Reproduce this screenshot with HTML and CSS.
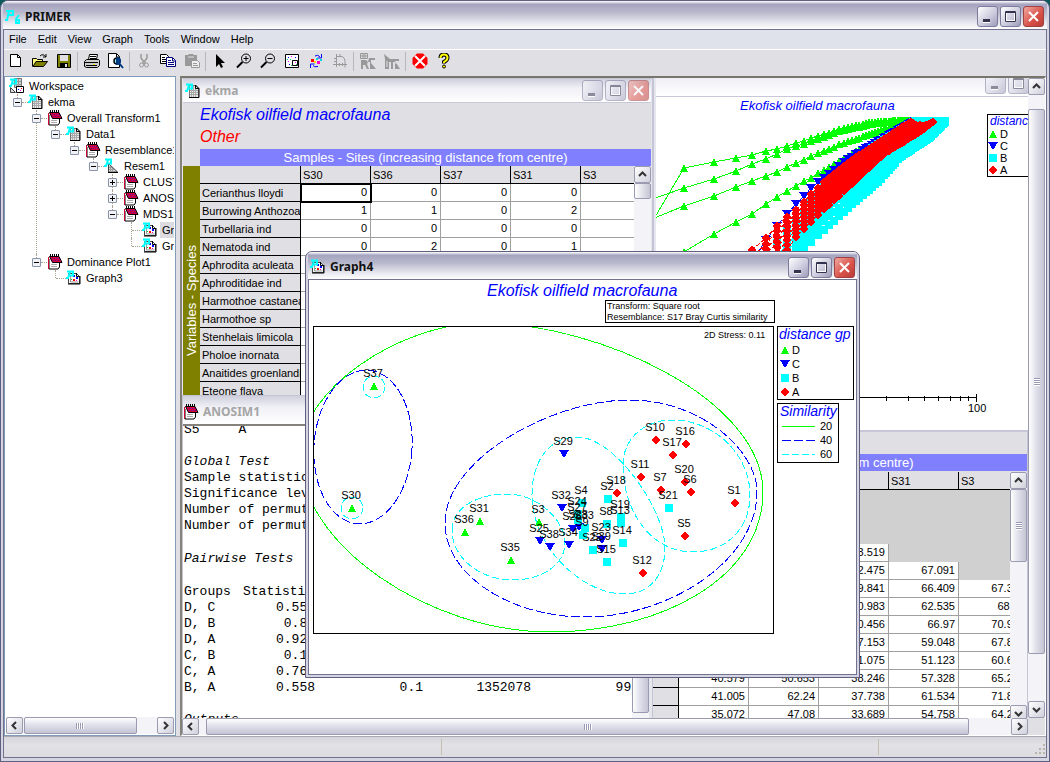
FILE: index.html
```html
<!DOCTYPE html>
<html lang="en">
<head>
    <meta charset="utf-8">
    <title>PRIMER</title>
    <link rel="stylesheet" href="styles.css">
</head>
<body>

<svg class="defs" aria-hidden="true">
    <symbol id="i-p" viewBox="0 0 16 16"><path d="M1 1.500h6v4H3M4 2L2 8H0" fill="none" stroke="#0ff" stroke-width="2"/></symbol>
    <symbol id="i-primer" viewBox="0 0 16 16"><path d="M1 2h7v4H4M4 2L2 11H0M14 6l-3 4v4h3v-3h-3" fill="none" stroke="#0ff" stroke-width="2"/></symbol>
    <symbol id="i-sheet" viewBox="0 0 16 16">
        <path d="M4.500 2.500h6l3 3v9h-9z" fill="#e8e8e8" stroke="#777"/>
        <path d="M5 7.500h8M5 9.500h8M5 11.500h8M6.500 5v9M8.500 3v11M10.500 4v10" stroke="#aaa"/>
        <path d="M14 5.500v9H4M10.500 2v3.500h3.500z" fill="none" stroke="#000"/>
        <use href="#i-p"/>
    </symbol>
    <symbol id="i-book" viewBox="0 0 16 16">
        <path d="M2 5v10h9l1.500-2V6" fill="#fff" stroke="#000"/>
        <path d="M1.500 3v12" stroke="#d00030"/>
        <path d="M4 10.500h6M4 12.500h6" stroke="#aaa"/>
        <path d="M2.500 2.500H12l3 6H5.500z" fill="#d8003c" stroke="#000"/>
        <path d="M5 4.500h7M6 6.500h7" stroke="#6010a0" stroke-dasharray="1 1"/>
        <path d="M3 1h10" stroke="#000" stroke-dasharray="1 1" stroke-width="2"/>
    </symbol>
    <symbol id="i-tri" viewBox="0 0 16 16">
        <path d="M4.500 5.500l9 8.500h-9z" fill="#ddd" stroke="#444"/><path d="M4 14.500h10" stroke="#000"/>
        <path d="M5 9.500h3M5 11.500h5M6.500 8v6M8.500 10v4" stroke="#999"/><use href="#i-p"/>
    </symbol>
    <symbol id="i-graph" viewBox="0 0 16 16">
        <path d="M2.500 3.500h8l3 3v7h-11z" fill="#fff" stroke="#444"/>
        <path d="M14 6v8H2M10.500 3v3.500H14" fill="none" stroke="#000"/>
        <path d="M4.500 5v7h8" fill="none" stroke="#999"/>
        <path d="M7 5h2v2H7zM10 7h2v2h-2z" fill="#00f"/><path d="M7 9h2v2H7z" fill="#f00"/><path d="M10 10h1v1h-1z" fill="#f0c"/><path d="M5 9h1v1H5z" fill="#0c4"/>
        <use href="#i-p"/>
    </symbol>
    <symbol id="i-space" viewBox="0 0 16 16">
        <path d="M5.500 .5h7v9h-7z" fill="#ccc" stroke="#777"/><path d="M7.500 1v9M9.500 1v9M5 3.500h7M5 6.500h7" stroke="#999"/>
        <path d="M1.500 9.500l5 5h-5z" fill="#ddd" stroke="#444"/><path d="M7.500 8.500h7v6h-7z" fill="#fff" stroke="#000"/>
        <path d="M9 11h1v1H9z" fill="#00f"/><path d="M12 10h1v1h-1z" fill="#f00"/><path d="M11 12h1v1h-1z" fill="#f0c"/><use href="#i-p"/>
    </symbol>
    <symbol id="t-new" viewBox="0 0 16 16"><path d="M2.500 1.500h7l3 3v9h-10z" fill="#fff" stroke="#000"/><path d="M9.500 1.500v3h3" fill="none" stroke="#000"/></symbol>
    <symbol id="t-open" viewBox="0 0 16 16"><path d="M.5 13.500v-8h4l1 1h5v2" fill="#ffff80" stroke="#000"/><path d="M1 13.500l3-5h11.500l-4 5z" fill="#808000" stroke="#000"/><path d="M8 3q3-3 6 1m0-3v3h-3" fill="none" stroke="#000"/></symbol>
    <symbol id="t-save" viewBox="0 0 16 16"><path d="M1.500 1.500h13v13h-13z" fill="#808000" stroke="#000"/><path d="M4 2h8v6H4z" fill="#e0dfe3"/><path d="M4 10h8v4H4z" fill="#000"/><path d="M9 11h2v3H9z" fill="#e0dfe3"/></symbol>
    <symbol id="t-print" viewBox="0 0 16 16"><path d="M4.500 6.500l1-5h8l-1 5" fill="#fff" stroke="#000"/><path d="M6 3.500h6M6 5.500h6" stroke="#000"/><path d="M.5 8.500l2-2h12l1 1v5l-2 2h-11l-2-1z" fill="#ccc" stroke="#000"/><path d="M1 9.500h13M2 12.500h11" stroke="#000"/><path d="M9 11h2v1H9z" fill="#ee0"/></symbol>
    <symbol id="t-preview" viewBox="0 0 16 16"><path d="M.5 .5h8l3 3v11H.5z" fill="#fff" stroke="#000"/><path d="M8.500 1v3h3" fill="none" stroke="#000"/><circle cx="9" cy="8" r="3" fill="#9ff" stroke="#000" stroke-width="1.500"/><path d="M9 5v6a3 3 0 0 0 0-6M11 10l4 5" fill="#004c9c" stroke="#003880" stroke-width="2"/></symbol>
    <symbol id="t-cut" viewBox="0 0 16 16"><path d="M5 1v4l3 4M11 1v4L8 9M7 9v2M9 9v2" fill="none" stroke="#999" stroke-width="1.500"/><circle cx="5.500" cy="12" r="2" fill="none" stroke="#999"/><circle cx="10.500" cy="12" r="2" fill="none" stroke="#999"/></symbol>
    <symbol id="t-copy" viewBox="0 0 16 16"><path d="M.5 1.500h6l2 2v7h-8z" fill="#fff" stroke="#000"/><path d="M2 4.500h3M2 6.500h5M2 8.500h5" stroke="#000"/><path d="M6.500 4.500h6l3 3v6h-9z" fill="#fff" stroke="#000080"/><path d="M12.500 5v3h3M8 7.500h3M8 9.500h6M8 11.500h6" fill="none" stroke="#000080"/></symbol>
    <symbol id="t-paste" viewBox="0 0 16 16"><path d="M1 2h3l1-1h4l1 1h3v11H1z" fill="#999"/><path d="M4 4h6" stroke="#e0dfe3"/><path d="M7.500 7.500h6l2 2v5h-8z" fill="#eee" stroke="#999"/><path d="M9 10.500h4M9 12.500h5" stroke="#999"/></symbol>
    <symbol id="t-arrow" viewBox="0 0 16 16"><path d="M4 1l9 9H9l2 4-2 1-2-4-3 3z" fill="#000"/></symbol>
    <symbol id="t-zin" viewBox="0 0 16 16"><circle cx="10" cy="5.500" r="4.500" fill="none" stroke="#000"/><path d="M7.500 5.500h5M10 3v5" stroke="#000"/><path d="M6.500 9L1 14.500" stroke="#000" stroke-width="2"/></symbol>
    <symbol id="t-zout" viewBox="0 0 16 16"><circle cx="10" cy="5.500" r="4.500" fill="none" stroke="#000"/><path d="M7.500 5.500h5" stroke="#000"/><path d="M6.500 9L1 14.500" stroke="#000" stroke-width="2"/></symbol>
    <symbol id="t-box" viewBox="0 0 16 16"><path d="M1.500 1.500h13v13h-13z" fill="#fff" stroke="#000"/><path d="M8.500 7.500h5v5h-5z" fill="none" stroke="#000"/><path d="M4 4h1v1H4zM11 4h1v1h-1zM5 11h1v1H5z" fill="#00f"/><path d="M7 3h1v1H7zM4 8h1v1H4zM11 9h1v1h-1z" fill="#f0f"/><path d="M3 6h1v1H3zM6 6h1v1H6zM12 11h1v1h-1zM7 12h1v1H7z" fill="#0c8"/></symbol>
    <symbol id="t-rot" viewBox="0 0 16 16"><path d="M7 3q3-2 5 1M13.500 1v4h-4M10 13.500q-4 1-5-1M2.500 15v-4h4" fill="none" stroke="#00f"/><path d="M3 6h3v3H3z" fill="#f00"/><path d="M8 5h2v2H8z" fill="#0dd"/><path d="M6 8h2v2H6z" fill="#fd0"/><path d="M9 8h3v3H9z" fill="#f0c"/><path d="M12 6h2v2h-2z" fill="#0dd"/></symbol>
    <symbol id="t-flip" viewBox="0 0 16 16"><path d="M4.500 1v13M1 11.500h14M4 3.500h6q3 1 3 5v6M2 5.500h3M2 8.500h3M7.500 10v3M10.500 10v3M8 1v3" fill="none" stroke="#999"/></symbol>
    <symbol id="t-r1" viewBox="0 0 16 16"><path d="M.5 .5h7v5h-7zM3 1v4M5 1v4M1 3h7" fill="none" stroke="#999"/><path d="M1 7h5l2 2-1 2 2 5H7l-2-4H3v4H1zM9 5h6v2h-4v3l5 6h-6V9H8z" fill="#999"/></symbol>
    <symbol id="t-r2" viewBox="0 0 16 16"><path d="M0 1l6 5h9v2h-4l5 8h-5V9H9v7H7V9H5v7H1V6z" fill="#999"/><path d="M3 8v6M12 8v3" stroke="#e0dfe3"/></symbol>
    <symbol id="t-stop" viewBox="0 0 16 16"><path d="M5 .5h6L15.500 5v6L11 15.500H5L.5 11V5z" fill="#f00"/><path d="M3 3l10 10M13 3L3 13" stroke="#fff" stroke-width="2"/></symbol>
    <symbol id="t-help" viewBox="0 0 16 16"><path d="M4.500 5q0-3.500 3.500-3.500T11.500 5Q11.500 7 8 9v1.500" fill="none" stroke="#000" stroke-width="4"/><path d="M4.500 5q0-3.500 3.500-3.500T11.500 5Q11.500 7 8 9v1" fill="none" stroke="#ff0" stroke-width="2"/><circle cx="8" cy="13.500" r="1.500" fill="#ff0" stroke="#000"/></symbol>
    <symbol id="b-min" viewBox="0 0 19 19"><path d="M5 13h7v3H5z" fill="#fff"/><path d="M5 12h7v3H5z" fill="currentColor"/></symbol>
    <symbol id="b-max" viewBox="0 0 19 19"><path d="M5 5h9v9H5z" fill="none" stroke="#fff" stroke-width="2"/><path d="M4.500 4.500h10v10h-10zM4 5.500h11" fill="none" stroke="currentColor"/></symbol>
    <symbol id="b-close" viewBox="0 0 19 19"><path d="M5 5l9 9M14 5l-9 9" stroke="#fff" stroke-width="2"/></symbol>
    <symbol id="s-up" viewBox="0 0 9 9"><path d="M1 6l3.500-3.500L8 6" fill="none" stroke="#333" stroke-width="2"/></symbol>
    <symbol id="s-down" viewBox="0 0 9 9"><path d="M1 3l3.500 3.500L8 3" fill="none" stroke="#333" stroke-width="2"/></symbol>
    <symbol id="s-left" viewBox="0 0 9 9"><path d="M6 1L2.500 4.500 6 8" fill="none" stroke="#333" stroke-width="2"/></symbol>
    <symbol id="s-right" viewBox="0 0 9 9"><path d="M3 1l3.500 3.500L3 8" fill="none" stroke="#333" stroke-width="2"/></symbol>
</svg>

<div class="app">
    <header class="titlebar main-title">
        <svg class="ico"><use href="#i-primer"/></svg>
        <h1 class="caption">PRIMER</h1>
        <div class="winbtns">
            <button aria-label="Minimize"><svg><use href="#b-min"/></svg></button>
            <button aria-label="Maximize"><svg><use href="#b-max"/></svg></button>
            <button class="close" aria-label="Close"><svg><use href="#b-close"/></svg></button>
        </div>
    </header>

    <div class="inner">
        <nav class="menubar">
            <button>File</button><button>Edit</button><button>View</button><button>Graph</button><button>Tools</button><button>Window</button><button>Help</button>
        </nav>

        <div class="toolbar">
            <button aria-label="New"><svg class="ico"><use href="#t-new"/></svg></button>
            <button aria-label="Open"><svg class="ico"><use href="#t-open"/></svg></button>
            <button aria-label="Save"><svg class="ico"><use href="#t-save"/></svg></button>
            <span class="sep"></span>
            <button aria-label="Print"><svg class="ico"><use href="#t-print"/></svg></button>
            <button aria-label="Print preview"><svg class="ico"><use href="#t-preview"/></svg></button>
            <span class="sep"></span>
            <button aria-label="Cut"><svg class="ico"><use href="#t-cut"/></svg></button>
            <button aria-label="Copy"><svg class="ico"><use href="#t-copy"/></svg></button>
            <button aria-label="Paste"><svg class="ico"><use href="#t-paste"/></svg></button>
            <span class="sep"></span>
            <button aria-label="Select"><svg class="ico"><use href="#t-arrow"/></svg></button>
            <button aria-label="Zoom in"><svg class="ico"><use href="#t-zin"/></svg></button>
            <button aria-label="Zoom out"><svg class="ico"><use href="#t-zout"/></svg></button>
            <button aria-label="Sub plot"><svg class="ico"><use href="#t-box"/></svg></button>
            <button aria-label="Rotate"><svg class="ico"><use href="#t-rot"/></svg></button>
            <button aria-label="Flip axes"><svg class="ico"><use href="#t-flip"/></svg></button>
            <span class="sep"></span>
            <button aria-label="Rerun data"><svg class="ico"><use href="#t-r1"/></svg></button>
            <button aria-label="Rerun resemblance"><svg class="ico"><use href="#t-r2"/></svg></button>
            <span class="sep"></span>
            <button aria-label="Stop"><svg class="ico"><use href="#t-stop"/></svg></button>
            <button aria-label="Help"><svg class="ico"><use href="#t-help"/></svg></button>
        </div>

        <main class="work">
            <aside class="explorer">
                <div class="treebox">
                    <div class="node root"><svg class="ico"><use href="#i-space"/></svg><span>Workspace</span></div>
                    <ul class="tree">
                        <li><div class="node"><button class="exp" aria-label="Collapse"></button><svg class="ico"><use href="#i-sheet"/></svg><span>ekma</span></div>
                            <ul>
                                <li><div class="node"><button class="exp" aria-label="Collapse"></button><svg class="ico"><use href="#i-book"/></svg><span>Overall Transform1</span></div>
                                    <ul>
                                        <li><div class="node"><button class="exp" aria-label="Collapse"></button><svg class="ico"><use href="#i-sheet"/></svg><span>Data1</span></div>
                                            <ul>
                                                <li><div class="node"><button class="exp" aria-label="Collapse"></button><svg class="ico"><use href="#i-book"/></svg><span>Resemblance1</span></div>
                                                    <ul>
                                                        <li><div class="node"><button class="exp" aria-label="Collapse"></button><svg class="ico"><use href="#i-tri"/></svg><span>Resem1</span></div>
                                                            <ul>
                                                                <li><div class="node"><button class="exp plus" aria-label="Expand"></button><svg class="ico"><use href="#i-book"/></svg><span>CLUSTER1</span></div></li>
                                                                <li><div class="node"><button class="exp plus" aria-label="Expand"></button><svg class="ico"><use href="#i-book"/></svg><span>ANOSIM1</span></div></li>
                                                                <li><div class="node"><button class="exp" aria-label="Collapse"></button><svg class="ico"><use href="#i-book"/></svg><span>MDS1</span></div>
                                                                    <ul>
                                                                        <li><div class="node leaf"><svg class="ico"><use href="#i-graph"/></svg><span class="sel">Graph4</span></div></li>
                                                                        <li><div class="node leaf"><svg class="ico"><use href="#i-graph"/></svg><span>Graph5</span></div></li>
                                                                    </ul>
                                                                </li>
                                                            </ul>
                                                        </li>
                                                    </ul>
                                                </li>
                                            </ul>
                                        </li>
                                    </ul>
                                </li>
                                <li><div class="node"><button class="exp" aria-label="Collapse"></button><svg class="ico"><use href="#i-book"/></svg><span>Dominance Plot1</span></div>
                                    <ul>
                                        <li><div class="node leaf"><svg class="ico"><use href="#i-graph"/></svg><span>Graph3</span></div></li>
                                    </ul>
                                </li>
                            </ul>
                        </li>
                    </ul>
                </div>
                <div class="hscroll">
                    <button aria-label="Scroll left"><svg><use href="#s-left"/></svg></button>
                    <div class="track"><div class="thumb tree-thumb"></div></div>
                    <button aria-label="Scroll right"><svg><use href="#s-right"/></svg></button>
                </div>
            </aside>

            <div class="mdi">
                <div class="desk">

                    <section class="win win-resem">
                        <div class="titlebar"><svg class="ico"><use href="#i-tri"/></svg><h2 class="caption">Resem1</h2></div>
                        <div class="content sheet">
                            <div class="band resem-band">Samples - Sites (increasing distance from centre)</div>
                            <div class="gridrow">
                                <div class="gridclip">
                                    <table class="grid resem-grid">
                                        <thead><tr><th class="rh"></th><th>S30</th><th>S36</th><th>S37</th><th>S31</th><th>S3</th></tr></thead>
                                        <tbody>
                                            <tr><th class="rh">S30</th><td class="off"></td><td class="off"></td><td class="off"></td><td class="off"></td><td class="off"></td></tr>
                                            <tr><th class="rh">S36</th><td></td><td class="off"></td><td class="off"></td><td class="off"></td><td class="off"></td></tr>
                                            <tr><th class="rh">S37</th><td></td><td></td><td class="off"></td><td class="off"></td><td class="off"></td></tr>
                                            <tr><th class="rh">S31</th><td></td><td></td><td>53.519</td><td class="off"></td><td class="off"></td></tr>
                                            <tr><th class="rh">S3</th><td></td><td></td><td>42.475</td><td>67.091</td><td class="off"></td></tr>
                                            <tr><th class="rh"></th><td></td><td></td><td>39.841</td><td>66.409</td><td>67.312</td></tr>
                                            <tr><th class="rh"></th><td></td><td></td><td>40.983</td><td>62.535</td><td>68.14</td></tr>
                                            <tr><th class="rh"></th><td></td><td></td><td>40.456</td><td>66.97</td><td>70.921</td></tr>
                                            <tr><th class="rh"></th><td></td><td></td><td>37.153</td><td>59.048</td><td>67.843</td></tr>
                                            <tr><th class="rh"></th><td></td><td></td><td>31.075</td><td>51.123</td><td>60.617</td></tr>
                                            <tr><th class="rh"></th><td>40.579</td><td>50.653</td><td>38.246</td><td>57.328</td><td>65.224</td></tr>
                                            <tr><th class="rh"></th><td>41.005</td><td>62.24</td><td>37.738</td><td>61.534</td><td>71.805</td></tr>
                                            <tr><th class="rh"></th><td>35.072</td><td>47.08</td><td>33.689</td><td>54.758</td><td>64.239</td></tr>
                                        </tbody>
                                    </table>
                                </div>
                                <div class="vscroll">
                                    <button aria-label="Scroll up"><svg><use href="#s-up"/></svg></button>
                                    <div class="track"><div class="thumb resem-thumb"></div></div>
                                    <button aria-label="Scroll down"><svg><use href="#s-down"/></svg></button>
                                </div>
                            </div>
                        </div>
                    </section>

                    <section class="win win-dom">
                        <div class="titlebar">
                            <svg class="ico"></svg><h2 class="caption"></h2>
                            <div class="winbtns">
                                <button aria-label="Minimize"><svg><use href="#b-min"/></svg></button>
                                <button aria-label="Maximize"><svg><use href="#b-max"/></svg></button>
                            </div>
                        </div>
                        <div class="content">
                            <svg class="plot" id="domPlot" width="372" height="332" viewBox="656 97 372 332" role="img" aria-label="Dominance plot">
                                <text class="t-small" x="740" y="110">Ekofisk oilfield macrofauna</text>
                                <g id="domCurves"></g>
                                <path class="ink" d="M656 397.500H976M976.500 394v8M968.500 396v5M960.500 396v5M950.500 396v5M938.500 396v5M924.500 396v5M908.500 396v5M886.500 396v5"/>
                                <text x="968" y="412">100</text>
                                <rect class="frame" x="987.500" y="114.500" width="60" height="62"/>
                                <text class="t-small t-leg" x="990" y="125">distance gp</text>
                                <g class="keys" data-x="993" data-y="134" data-step="12"></g>
                            </svg>
                        </div>
                    </section>

                    <section class="win win-ekma">
                        <div class="titlebar">
                            <svg class="ico"><use href="#i-sheet"/></svg><h2 class="caption">ekma</h2>
                            <div class="winbtns">
                                <button aria-label="Minimize"><svg><use href="#b-min"/></svg></button>
                                <button aria-label="Maximize"><svg><use href="#b-max"/></svg></button>
                                <button class="close" aria-label="Close"><svg><use href="#b-close"/></svg></button>
                            </div>
                        </div>
                        <div class="content sheet">
                            <div class="heading blue">Ekofisk oilfield macrofauna</div>
                            <div class="heading red">Other</div>
                            <div class="band">Samples - Sites (increasing distance from centre)</div>
                            <div class="gridrow">
                                <div class="side"><span>Variables - Species</span></div>
                                <div class="gridclip">
                                    <table class="grid">
                                        <thead><tr><th class="rh"></th><th>S30</th><th>S36</th><th>S37</th><th>S31</th><th>S3</th></tr></thead>
                                        <tbody>
                                            <tr><th class="rh">Cerianthus lloydi</th><td class="cur">0</td><td>0</td><td>0</td><td>0</td><td></td></tr>
                                            <tr><th class="rh">Burrowing Anthozoa</th><td>1</td><td>1</td><td>0</td><td>2</td><td></td></tr>
                                            <tr><th class="rh">Turbellaria ind</th><td>0</td><td>0</td><td>0</td><td>0</td><td></td></tr>
                                            <tr><th class="rh">Nematoda ind</th><td>0</td><td>2</td><td>0</td><td>1</td><td></td></tr>
                                            <tr><th class="rh">Aphrodita aculeata</th><td></td><td></td><td></td><td></td><td></td></tr>
                                            <tr><th class="rh">Aphroditidae ind</th><td></td><td></td><td></td><td></td><td></td></tr>
                                            <tr><th class="rh">Harmothoe castanea</th><td></td><td></td><td></td><td></td><td></td></tr>
                                            <tr><th class="rh">Harmothoe sp</th><td></td><td></td><td></td><td></td><td></td></tr>
                                            <tr><th class="rh">Stenhelais limicola</th><td></td><td></td><td></td><td></td><td></td></tr>
                                            <tr><th class="rh">Pholoe inornata</th><td></td><td></td><td></td><td></td><td></td></tr>
                                            <tr><th class="rh">Anaitides groenlandica</th><td></td><td></td><td></td><td></td><td></td></tr>
                                            <tr><th class="rh">Eteone flava</th><td></td><td></td><td></td><td></td><td></td></tr>
                                        </tbody>
                                    </table>
                                </div>
                                <div class="vscroll">
                                    <button aria-label="Scroll up"><svg><use href="#s-up"/></svg></button>
                                    <div class="track"><div class="thumb ekma-thumb"></div></div>
                                </div>
                            </div>
                        </div>
                    </section>

                    <section class="win win-anosim">
                        <div class="titlebar"><svg class="ico"><use href="#i-book"/></svg><h2 class="caption">ANOSIM1</h2></div>
                        <div class="content report">
                            <div class="report-text">
<pre>S5     A

<i>Global Test</i>
Sample statistic (Global R): 0.54
Significance level of sample statistic: 0.1%
Number of permutations: 999
Number of permuted statistics: 0
</pre>
<pre>
<i>Pairwise Tests</i>
</pre>
                                <table class="pairs">
                                    <thead><tr><th>Groups</th><th>Statistic</th><th></th><th></th><th></th></tr></thead>
                                    <tbody>
                                        <tr><td>D, C</td><td>0.556</td><td></td><td></td><td></td></tr>
                                        <tr><td>D, B</td><td>0.85</td><td></td><td></td><td></td></tr>
                                        <tr><td>D, A</td><td>0.924</td><td></td><td></td><td></td></tr>
                                        <tr><td>C, B</td><td>0.16</td><td></td><td></td><td></td></tr>
                                        <tr><td>C, A</td><td>0.769</td><td></td><td></td><td></td></tr>
                                        <tr><td>B, A</td><td>0.558</td><td>0.1</td><td>1352078</td><td>999</td></tr>
                                    </tbody>
                                </table>
<pre class="after"><i>Outputs</i></pre>
                            </div>
                            <div class="vscroll"><div class="track"><div class="thumb anosim-thumb"></div></div></div>
                        </div>
                    </section>

                    <section class="win win-graph active">
                        <div class="titlebar">
                            <svg class="ico"><use href="#i-graph"/></svg><h2 class="caption">Graph4</h2>
                            <div class="winbtns">
                                <button aria-label="Minimize"><svg><use href="#b-min"/></svg></button>
                                <button aria-label="Maximize"><svg><use href="#b-max"/></svg></button>
                                <button class="close" aria-label="Close"><svg><use href="#b-close"/></svg></button>
                            </div>
                        </div>
                        <div class="content">
                            <svg class="plot" width="548" height="394" viewBox="309 280 548 394" role="img" aria-label="MDS plot">
                                <text class="t-big" x="487" y="296">Ekofisk oilfield macrofauna</text>
                                <rect class="frame" x="605.500" y="300.500" width="169" height="22"/>
                                <text class="t-note" x="607" y="309">Transform: Square root</text>
                                <text class="t-note" x="607" y="320">Resemblance: S17 Bray Curtis similarity</text>
                                <rect class="frame" x="313.500" y="326.500" width="460" height="307"/>
                                <text class="t-note" x="704" y="338">2D Stress: 0.11</text>
                                <clipPath id="area"><rect x="314" y="327" width="459" height="306"/></clipPath>
                                <g clip-path="url(#area)">
                                    <path class="c20" d="M300 455C300 390 400 323 483 323C600 323 763 400 763 492C763 577 662 632 550 632C430 632 300 545 300 455"/>
                                    <ellipse class="c40" cx="363" cy="447" rx="49" ry="77" transform="rotate(4 363 447)"/>
                                    <path class="c40" d="M445 523C445 460 550 400 630 400C700 400 757 450 757 492C757 560 670 617 585 617C510 617 445 575 445 523z"/>
                                    <circle class="c60" cx="374" cy="387" r="11"/>
                                    <circle class="c60" cx="352" cy="508" r="11"/>
                                    <path class="c60" d="M452 530C452 508 477 494 507 494C537 494 565 520 565 543C565 565 541 580 513 580C480 580 452 558 452 530z"/>
                                    <path class="c60" d="M532 495C532 460 550 437 577 437C615 437 665 510 665 548C665 575 650 594 625 594C580 594 532 545 532 495z"/>
                                    <path class="c60" d="M623 465C623 438 645 420 672 420C715 420 750 455 750 495C750 530 725 552 693 552C650 552 623 510 623 465z"/>
                                </g>
                                <g id="mdsPoints"></g>
                                <rect class="frame" x="777.500" y="326.500" width="76" height="73"/>
                                <text class="t-head" x="779" y="339">distance gp</text>
                                <g class="keys" data-x="785" data-y="350" data-step="14"></g>
                                <rect class="frame" x="777.500" y="403.500" width="61" height="59"/>
                                <text class="t-head" x="780" y="416">Similarity</text>
                                <path class="c20" d="M782 426.500h33"/><text x="820" y="430">20</text>
                                <path class="c40" d="M782 440.500h33"/><text x="820" y="444">40</text>
                                <path class="c60" d="M782 454.500h33"/><text x="820" y="458">60</text>
                            </svg>
                        </div>
                    </section>
                </div>

                <div class="vscroll main-v">
                    <button aria-label="Scroll up"><svg><use href="#s-up"/></svg></button>
                    <div class="track"><div class="thumb main-vthumb"></div></div>
                    <button aria-label="Scroll down"><svg><use href="#s-down"/></svg></button>
                </div>
                <div class="hscroll main-h">
                    <button aria-label="Scroll left"><svg><use href="#s-left"/></svg></button>
                    <div class="track"><div class="thumb main-hthumb"></div></div>
                    <button aria-label="Scroll right"><svg><use href="#s-right"/></svg></button>
                </div>
            </div>
        </main>

        <footer class="status">
            <span></span><span></span>
            <svg class="sizer" viewBox="0 0 12 12"><path d="M9 1h2v2H9zM5 5h2v2H5zM9 5h2v2H9zM1 9h2v2H1zM5 9h2v2H5zM9 9h2v2H9z" fill="#b8b4a8"/></svg>
        </footer>
    </div>
</div>

<script src="plots.js"></script>
</body>
</html>
```
FILE: styles.css
```css
* {
    box-sizing: border-box;
}

body {
    margin: 0;
    height: 100vh;
    overflow: hidden;
    background: #0a5a5a;
    font-family: "Liberation Sans", Arial, sans-serif;
    font-size: 11px;
    color: #000;
    cursor: default;
}

button {
    padding: 0;
    margin: 0;
    border: 0;
    background: none;
    font: inherit;
    color: inherit;
}

ul {
    list-style: none;
    margin: 0;
    padding: 0;
}

.defs {
    display: none;
}

.ico {
    width: 16px;
    height: 16px;
    flex: none;
}

/* frame */
.app {
    display: flex;
    flex-direction: column;
    height: 100%;
    border: 1px solid #5f5f80;
    border-radius: 8px 8px 0 0;
    background: #d4d4e2;
    padding: 0 2px 3px;
    overflow: hidden;
}

.inner {
    flex: 1;
    min-height: 0;
    display: flex;
    flex-direction: column;
    border: 1px solid #72728f;
    background: #e0dfe3;
}

.titlebar {
    display: flex;
    align-items: center;
    height: 26px;
    flex: none;
    padding: 0 4px;
    gap: 4px;
    background: linear-gradient(#d0d0de, #f0f0f6 40%, #fff);
    color: #a5a5a5;
}

.main-title {
    height: 28px;
    padding: 3px 3px 0 2px;
    margin: 0;
}

.main-title,
.active .titlebar {
    background: linear-gradient(#fff 0, #a4a4c0 12%, #b8b8cc 40%, #e4e4ec 75%, #fff);
    color: #111;
}

.caption {
    flex: 1;
    margin: 0;
    font: bold 12px/16px "Noto Sans", "Trebuchet MS", sans-serif;
}

.winbtns {
    display: flex;
    gap: 2px;
}

.winbtns button {
    width: 21px;
    height: 21px;
    border: 1px solid #7c7c9c;
    border-radius: 3px;
    background: linear-gradient(135deg, #fff, #c8c8dc 60%, #9c9cb8);
    color: #33334d;
}

.winbtns svg {
    display: block;
    width: 19px;
    height: 19px;
}

.winbtns .close {
    border-color: #a04040;
    background: linear-gradient(135deg, #f0a8a0, #d85048 60%, #b83c38);
}

.win:not(.active) .winbtns button {
    opacity: .55;
}

/* menus and tools */
.menubar {
    display: flex;
    height: 20px;
    flex: none;
    padding-bottom: 2px;
    background: #dfe2eb;
    border-bottom: 1px solid #fff;
}

.menubar button {
    padding: 0 6px 0 5px;
}

.toolbar {
    display: flex;
    align-items: center;
    height: 26px;
    flex: none;
    padding-bottom: 4px;
}

.toolbar button {
    width: 24px;
    height: 22px;
    display: flex;
    align-items: center;
    justify-content: center;
}

.sep {
    width: 4px;
    height: 19px;
    background: linear-gradient(90deg, transparent 1px, #b8b8bc 1px, #b8b8bc 2px, transparent 2px);
}

.work {
    flex: 1;
    min-height: 0;
    display: flex;
    gap: 4px;
}

/* tree */
.explorer {
    width: 172px;
    flex: none;
    display: flex;
    flex-direction: column;
    background: #fff;
    border: 1px solid #7f9db9;
    padding: 1px;
}

.treebox {
    flex: 1;
    overflow: hidden;
}

.tree {
    padding-left: 7px;
}

.tree ul {
    padding-left: 19px;
}

.tree li {
    position: relative;
}

.tree li::before {
    content: "";
    position: absolute;
    left: 4px;
    top: 0;
    bottom: 0;
    border-left: 1px dotted #a8a490;
}

.tree li:last-child::before {
    bottom: auto;
    height: 8px;
}

.node {
    display: flex;
    align-items: center;
    height: 16px;
    white-space: nowrap;
}

.node span {
    flex: none;
    margin-left: 2px;
    padding: 0 2px;
    line-height: 16px;
}

.node .sel {
    background: #dcdce0;
}

.root {
    padding-left: 3px;
}

.tree .node::before {
    content: "";
    order: 1;
    flex: none;
    width: 6px;
    border-top: 1px dotted #a8a490;
}

.tree .ico,
.tree span {
    order: 2;
}

.tree .leaf::before {
    margin-left: 5px;
    width: 10px;
}

.exp {
    position: relative;
    flex: none;
    width: 9px;
    height: 9px;
    border: 1px solid #8894a8;
    border-radius: 1px;
    background: linear-gradient(#000, #000) center / 5px 1px no-repeat, #f2f2f6;
}

.exp.plus {
    background: linear-gradient(#000, #000) center / 5px 1px no-repeat, linear-gradient(#000, #000) center / 1px 5px no-repeat, #f2f2f6;
}

/* scroll bars */
.hscroll,
.vscroll {
    display: flex;
    flex: none;
    background: #f3f3f8;
}

.hscroll {
    height: 17px;
}

.vscroll {
    width: 17px;
    flex-direction: column;
}

.hscroll button,
.vscroll button {
    display: flex;
    align-items: center;
    justify-content: center;
    width: 17px;
    height: 17px;
    flex: none;
    border: 1px solid #9a9ab0;
    border-radius: 2px;
    background: linear-gradient(135deg, #fff, #d0d0dc);
}

.hscroll button svg,
.vscroll button svg {
    width: 9px;
    height: 9px;
}

.track {
    flex: 1;
    min-height: 0;
    display: flex;
}

.vscroll .track {
    flex-direction: column;
}

.thumb {
    border: 1px solid #9a9ab0;
    border-radius: 2px;
    background:
        repeating-linear-gradient(90deg, #9a9ab4 0, #9a9ab4 1px, #fff 1px, #fff 2px) center / 8px 6px no-repeat,
        linear-gradient(#fff, #e4e4ee 40%, #c4c4d4);
}

.vscroll .thumb {
    background:
        repeating-linear-gradient(#9a9ab4 0, #9a9ab4 1px, #fff 1px, #fff 2px) center / 6px 8px no-repeat,
        linear-gradient(90deg, #fff, #e4e4ee 40%, #c4c4d4);
}

.tree-thumb {
    width: 84%;
    margin-left: 1px;
}

.main-hthumb {
    width: 94%;
    margin-left: 7px;
}

.main-vthumb {
    height: 90%;
    margin-top: 14px;
}

.resem-thumb {
    height: 34%;
}

.ekma-thumb {
    height: 16px;
}

.vscroll .ekma-thumb {
    background: linear-gradient(90deg, #fff, #c4c4d4);
}

.anosim-thumb {
    height: 98%;
}

/* desktop area */
.mdi {
    flex: 1;
    min-width: 0;
    display: grid;
    grid-template-columns: 1fr 17px;
    grid-template-rows: 1fr 17px;
    border: 1px solid #fff;
    border-top: 2px solid #77756c;
    border-left: 2px solid #84827a;
}

.desk {
    position: relative;
    overflow: hidden;
    background: #808080;
}

.win {
    position: absolute;
    display: flex;
    flex-direction: column;
    background: #e6e6ee;
    border: 1px solid #c4c4d4;
}

.content {
    flex: 1;
    min-height: 0;
    background: #fff;
    border-top: 1px solid #c8c8d8;
    overflow: hidden;
}

.win-ekma {
    left: 0;
    top: 0;
    width: 471px;
    height: 318px;
    padding-right: 1px;
    border-left-color: #e8e8ee;
}

.win-ekma .content {
    padding-top: 1px;
}

.win-ekma .band {
    margin-top: 1px;
}

.win-ekma .titlebar {
    height: 23px;
    padding: 0 2px;
}

.win-anosim {
    left: 0;
    top: 317px;
    width: 471px;
    bottom: -2px;
    padding-right: 3px;
}

.win-anosim .titlebar {
    height: 28px;
    padding: 3px 0 0;
}

.win-dom {
    left: 471px;
    right: -26px;
    top: -11px;
    height: 364px;
    padding-left: 2px;
}

.win-dom .titlebar {
    height: 28px;
    padding: 2px 24px 0 4px;
}

.win-resem {
    left: 333px;
    right: 0;
    top: 326px;
    bottom: -5px;
}

.win-graph {
    left: 123px;
    top: 173px;
    width: 555px;
    height: 427px;
    border: 1px solid #5f5f80;
    border-radius: 7px 7px 0 0;
    padding: 0 2px 2px;
    background: #d4d4e2;
    overflow: hidden;
}

.win-graph .titlebar {
    height: 27px;
    padding: 3px 2px 0;
}

.win-graph .content {
    border: 1px solid #72728f;
}

.sheet {
    display: flex;
    flex-direction: column;
    background: #e0dfe3;
}

.heading {
    padding-left: 17px;
    font-size: 16px;
    line-height: 22px;
    font-style: italic;
}

.blue {
    color: #00f;
}

.red {
    color: #f00;
}

.band {
    margin-left: 17px;
    height: 17px;
    flex: none;
    background: #8080ff;
    color: #fff;
    font-size: 13px;
    line-height: 17px;
    text-align: center;
}

.resem-band {
    margin: 22px 0 1px;
}

.gridrow {
    flex: 1;
    min-height: 0;
    display: flex;
}

.gridclip {
    flex: 1;
    min-width: 0;
    overflow: hidden;
    background: #d0d0d0;
}

.side {
    width: 17px;
    flex: none;
    display: flex;
    justify-content: center;
    align-items: flex-end;
    padding-bottom: 39px;
    background: #808000;
    color: #fff;
}

.side span {
    writing-mode: vertical-rl;
    transform: rotate(180deg);
    font-size: 13px;
    line-height: 17px;
    white-space: nowrap;
}

.grid {
    table-layout: fixed;
    width: 451px;
    border-collapse: separate;
    border-spacing: 0;
}

.grid th,
.grid td {
    width: 70px;
    height: 18px;
    padding: 0 3px 0 2px;
    overflow: hidden;
    white-space: nowrap;
    line-height: 15px;
}

.grid th {
    padding-top: 2px;
    font-weight: normal;
    text-align: left;
    background: #e0dfe3;
    border: 1px solid #000;
    border-width: 0 1px 1px 0;
}

.grid .rh {
    width: 101px;
}

.grid td {
    text-align: right;
    background: #fff;
    border: 1px solid #a0a0a0;
    border-width: 0 1px 1px 0;
}

.grid .cur {
    outline: 2px solid #000;
    outline-offset: -1px;
}

.resem-grid {
    width: 513px;
}

.resem-grid .rh {
    width: 163px;
}

.grid .off {
    background: #d0d0d0;
    border-color: #d0d0d0;
}

/* results text */
.report {
    display: flex;
    border-top: 2px solid #84827a;
}

.report-text {
    flex: 1;
    min-width: 0;
    overflow: hidden;
    padding-left: 1px;
    font: 13px/16px "Liberation Mono", "Courier New", monospace;
}

.report-text pre {
    margin: 0 0 17px;
    font: inherit;
}

.report-text pre:first-child {
    margin-top: -4px;
}

.report-text .after {
    margin: 16px 0 0;
}

.pairs {
    table-layout: fixed;
    width: 450px;
    border-collapse: collapse;
}

.pairs th,
.pairs td {
    padding: 0;
    height: 16px;
    width: 82px;
    font-weight: normal;
    text-align: right;
    white-space: nowrap;
}

.pairs th:first-child,
.pairs td:first-child {
    width: 49px;
    text-align: left;
}

.pairs th:nth-child(2) {
    text-align: left;
    padding-left: 10px;
}

.pairs th:nth-child(3),
.pairs th:nth-child(4),
.pairs th:nth-child(5) {
    width: 108px;
}

/* plots */
.plot {
    display: block;
    background: #fff;
    shape-rendering: crispEdges;
}

.plot text {
    font-size: 11px;
    fill: #000;
}

.plot .t-note {
    font-size: 9px;
}

.plot .t-big,
.plot .t-head,
.plot .t-small {
    font-style: italic;
    fill: #00f;
}

.plot .t-big {
    font-size: 16px;
}

.plot .t-head {
    font-size: 14px;
}

.plot .t-small {
    font-size: 13px;
}

.plot .t-leg {
    font-size: 12px;
}

.frame,
.ink {
    fill: none;
    stroke: #000;
}

.c20,
.c40,
.c60 {
    fill: none;
    stroke: #0f0;
}

.c40 {
    stroke: #00f;
    stroke-dasharray: 9 3;
}

.c60 {
    stroke: #0ff;
    stroke-dasharray: 7 3;
}

.curve {
    fill: none;
}

/* status bar */
.status {
    display: flex;
    flex: none;
    height: 21px;
    padding: 2px 0;
    border-top: 1px solid #a8a8b0;
    background: linear-gradient(#d4d4da, #e2e2e6 40%, #dcdce0);
}

.status span {
    flex: 1;
    border-right: 1px solid #c4c0b0;
}

.sizer {
    width: 12px;
    height: 12px;
    margin: 4px 0 0 155px;
}
```
FILE: plots.js
```js
var NS = 'http://www.w3.org/2000/svg';
var COLORS = { D: '#0f0', C: '#00f', B: '#0ff', A: '#f00' };

function el(parent, name, attrs, text) {
    var e = document.createElementNS(NS, name);
    for (var k in attrs) e.setAttribute(k, attrs[k]);
    if (text) e.textContent = text;
    parent.appendChild(e);
    return e;
}

function marker(parent, g, x, y) {
    var d = {
        D: 'M-4 4L0 -4L4 4z',
        C: 'M-5 -4L0 4L5 -4z',
        B: 'M-4 -4H4V4H-4z',
        A: 'M-4 0L0 -4L4 0L0 4z'
    }[g];
    el(parent, 'path', { d: d, fill: COLORS[g], stroke: g == 'A' ? COLORS[g] : 'none', transform: 'translate(' + x + ' ' + y + ')' });
}

// legends
[].forEach.call(document.querySelectorAll('.keys'), function (k) {
    ['D', 'C', 'B', 'A'].forEach(function (g, i) {
        var y = +k.dataset.y + i * k.dataset.step;
        marker(k, g, +k.dataset.x, y);
        el(k, 'text', { x: +k.dataset.x + 7, y: y + 4 }, g);
    });
});

// MDS ordination
var points = [
    ['S37', 'D', 374, 386], ['S30', 'D', 352, 508], ['S31', 'D', 480, 521], ['S36', 'D', 465, 532],
    ['S35', 'D', 511, 560], ['S3', 'D', 539, 522],
    ['S29', 'C', 564, 454], ['S32', 'C', 562, 508], ['S25', 'C', 540, 541], ['S38', 'C', 550, 547],
    ['S34', 'C', 569, 545], ['S26', 'C', 573, 529], ['S28', 'C', 579, 527], ['S23', 'C', 602, 540],
    ['S39', 'C', 602, 549],
    ['S4', 'B', 582, 503], ['S24', 'B', 578, 514], ['S27', 'B', 578, 520], ['S33', 'B', 585, 528], ['S9', 'B', 583, 535],
    ['S2', 'B', 608, 499], ['S8', 'B', 607, 524], ['S19', 'B', 621, 517], ['S13', 'B', 621, 523],
    ['S14', 'B', 623, 543], ['S22', 'B', 593, 550], ['S15', 'B', 607, 562], ['S21', 'B', 669, 508],
    ['S10', 'A', 656, 440], ['S16', 'A', 686, 444], ['S17', 'A', 673, 455], ['S11', 'A', 641, 477],
    ['S18', 'A', 617, 493], ['S7', 'A', 661, 490], ['S20', 'A', 685, 482], ['S6', 'A', 691, 492],
    ['S1', 'A', 735, 503], ['S5', 'A', 685, 536], ['S12', 'A', 643, 573]
];
var mds = document.getElementById('mdsPoints');
points.forEach(function (p) { marker(mds, p[1], p[2], p[3]); });
points.forEach(function (p) {
    el(mds, 'text', { x: p[2] - 1, y: p[3] - 9, 'text-anchor': 'middle' }, p[0]);
});

// dominance curves: log rank along x
function yAt(c, x) {
    for (var i = 1; i < c.length; i++) {
        if (x <= c[i][0]) {
            var a = c[i - 1], b = c[i];
            return a[1] + (b[1] - a[1]) * (x - a[0]) / (b[0] - a[0]);
        }
    }
    return c[c.length - 1][1];
}

function between(a, b, t) {
    return function (x) { return yAt(a, x) * (1 - t) + yAt(b, x) * t; };
}

function curve(g, fn, endX, fromX) {
    var pts = [];
    for (var n = 1; n < 100; n++) {
        var x = Math.round(632 + 172 * Math.log(n) / Math.LN10);
        if (x > endX) break;
        if (fromX && x < fromX) continue;
        pts.push([x, Math.max(120, Math.round(fn(x)))]);
    }
    el(dom, 'polyline', { points: pts.join(' '), 'class': 'curve', stroke: COLORS[g], 'stroke-dasharray': g == 'D' ? 'none' : '4 2' });
    pts.forEach(function (p) { marker(dom, g, p[0], p[1]); });
}

var dom = document.getElementById('domCurves');
var green = [
    [[632, 256], [684, 168], [714, 162], [736, 158], [753, 155], [766, 151], [788, 146], [812, 138], [840, 129], [870, 122], [900, 120], [920, 119]],
    [[632, 206], [684, 188], [714, 179], [736, 171], [753, 164], [766, 159], [788, 149], [812, 141], [840, 131], [870, 124], [905, 120], [920, 119]],
    [[632, 227], [684, 206], [714, 196], [736, 187], [753, 181], [766, 176], [788, 167], [812, 156], [840, 144], [870, 134], [900, 124], [920, 120]],
    [[632, 280], [684, 252], [714, 234], [736, 222], [753, 213], [766, 204], [788, 190], [812, 177], [840, 160], [870, 144], [900, 128], [920, 120]]
];
var blue = [[753, 260], [766, 240], [778, 225], [788, 213], [797, 203], [812, 187], [831, 172], [850, 158], [875, 143], [915, 121]];
var redTop = [[745, 256], [753, 249], [766, 238], [778, 225], [797, 209], [812, 193], [830, 177], [850, 161], [875, 145], [895, 132], [912, 121]];
var redLow = [[778, 262], [797, 236], [812, 221], [825, 208], [840, 195], [860, 176], [885, 153], [905, 141], [925, 128], [934, 121]];
var cyanTop = [[766, 255], [797, 220], [830, 180], [875, 146], [915, 121]];
var cyanLow = [[790, 262], [812, 241], [819, 234], [835, 220], [850, 206], [880, 180], [900, 157], [930, 137], [946, 121]];

green.forEach(function (c) { curve('D', function (x) { return yAt(c, x); }, 922); });
curve('C', function (x) { return yAt(blue, x); }, 915, 750);
[0, .4, .6, .8, 1].forEach(function (t) { curve('B', between(cyanTop, cyanLow, t), 945, 775); });
[0, .14, .28, .42, .57, .71, .85, 1].forEach(function (t) { curve('A', between(redTop, redLow, t), 912 + 21 * t, 750); });
```
